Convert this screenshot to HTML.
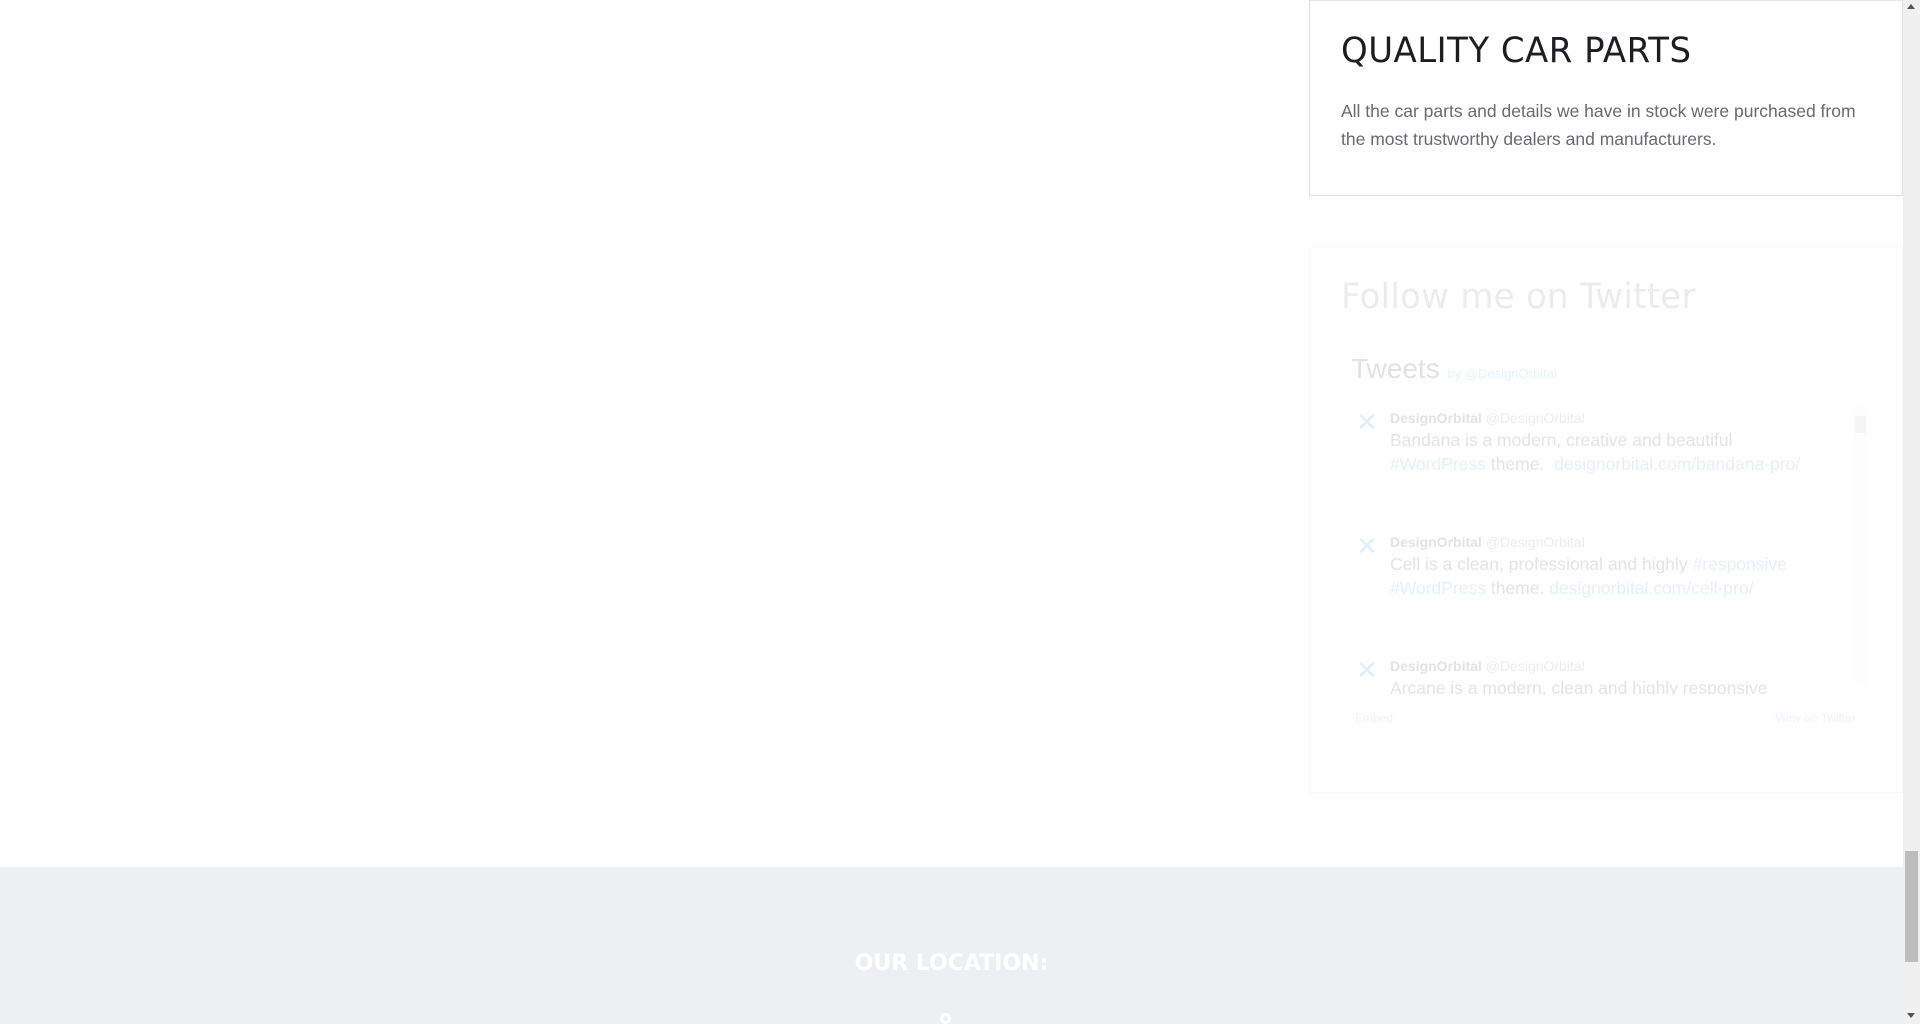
<!DOCTYPE html>
<html><head><meta charset="utf-8"><style>
*{margin:0;padding:0;box-sizing:border-box}
html,body{width:1920px;height:1024px;overflow:hidden;background:#fff;font-family:"Liberation Sans",sans-serif}
.abs{position:absolute}
.card{left:1309px;top:0;width:594px;height:196px;border:1px solid #dfe0e4;border-top:1px solid #e6e6ea;background:#fff}
.card h2{position:absolute;left:31px;top:30px;font:400 35px "DejaVu Sans","Liberation Sans",sans-serif;color:#1e1e22;letter-spacing:.5px;transform:scaleX(.97);transform-origin:left}
.card p{position:absolute;left:31px;top:96px;width:530px;font:300 17.5px/28px "Liberation Sans",sans-serif;color:#6a6a6e}
.tw{left:1309px;top:246px;width:594px;height:547px;border:1px solid #f9f9f9}
.tw h3{position:absolute;left:31px;top:30px;font:400 35px "DejaVu Sans",sans-serif;color:#ececec;letter-spacing:.3px;transform:scaleX(.97);transform-origin:left}
.tweets{position:absolute;left:41px;top:106px;font-size:28px;color:#e2e2e2}
.tweets span{font-size:13px;color:#e8f2fa}
.t{position:absolute;left:1390px;width:420px}
.t .n{font:bold 14px "Liberation Sans",sans-serif;color:#e3e3e3}
.t .n span{font-weight:normal;color:#ededed}
.t .x{font:17.5px/24px "Liberation Sans",sans-serif;color:#e4e4e4;margin-top:2px}
.l{color:#e6f0f9}
.av{position:absolute;left:1356px;font:bold 26px "DejaVu Sans",sans-serif;color:#dff0f6}
.foot{left:0;top:867px;width:1903px;height:157px;background:#eeeff1}
.foot h4{position:absolute;left:0;width:1903px;text-align:center;top:84px;font:bold 22px "DejaVu Sans",sans-serif;color:#fff;letter-spacing:0}
.sb{left:1903px;top:0;width:17px;height:1024px;background:#f0f0f0}
</style></head><body>
<div class="abs card"><h2>QUALITY CAR PARTS</h2><p>All the car parts and details we have in stock were purchased from the most trustworthy dealers and manufacturers.</p></div>
<div class="abs tw"><h3>Follow me on Twitter</h3><div class="tweets">Tweets <span>by @DesignOrbital</span></div></div>
<div class="abs av" style="top:408px">✕</div>
<div class="abs av" style="top:532px">✕</div>
<div class="abs av" style="top:656px">✕</div>
<div class="abs t" style="top:410px"><div class="n">DesignOrbital <span>@DesignOrbital</span></div><div class="x">Bandana is a modern, creative and beautiful<br><span class="l">#WordPress</span> theme. &nbsp;<span class="l">designorbital.com/bandana-pro/</span></div></div>
<div class="abs t" style="top:534px"><div class="n">DesignOrbital <span>@DesignOrbital</span></div><div class="x">Cell is a clean, professional and highly <span class="l">#responsive</span><br><span class="l">#WordPress</span> theme. <span class="l">designorbital.com/cell-pro/</span></div></div>
<div class="abs t" style="top:658px;height:37px;overflow:hidden"><div class="n">DesignOrbital <span>@DesignOrbital</span></div><div class="x">Arcane is a modern, clean and highly responsive</div></div>
<div class="abs" style="left:1855px;top:405px;width:11px;height:280px;background:#fdfdfd"></div>
<div class="abs" style="left:1855px;top:416px;width:11px;height:17px;background:#f5f5f5"></div>
<div class="abs" style="left:1355px;top:711px;font-size:12px;color:#eef4fa">Embed</div>
<div class="abs" style="left:1775px;top:711px;font-size:12px;color:#eef4fa">View on Twitter</div>
<div class="abs foot"><h4>OUR LOCATION:</h4><div class="abs" style="left:940px;top:146px;width:11px;height:11px;border-radius:50%;border:3px solid #fff"></div></div>
<div class="abs sb"><div class="abs" style="left:2px;top:851px;width:13px;height:111px;background:#bdbdbd"></div>
<div class="abs" style="left:4px;top:4px;border:4px solid transparent;border-bottom:5px solid #555;border-top:0"></div>
<div class="abs" style="left:4px;top:1013px;border:4px solid transparent;border-top:5px solid #555;border-bottom:0"></div></div>
</body></html>
